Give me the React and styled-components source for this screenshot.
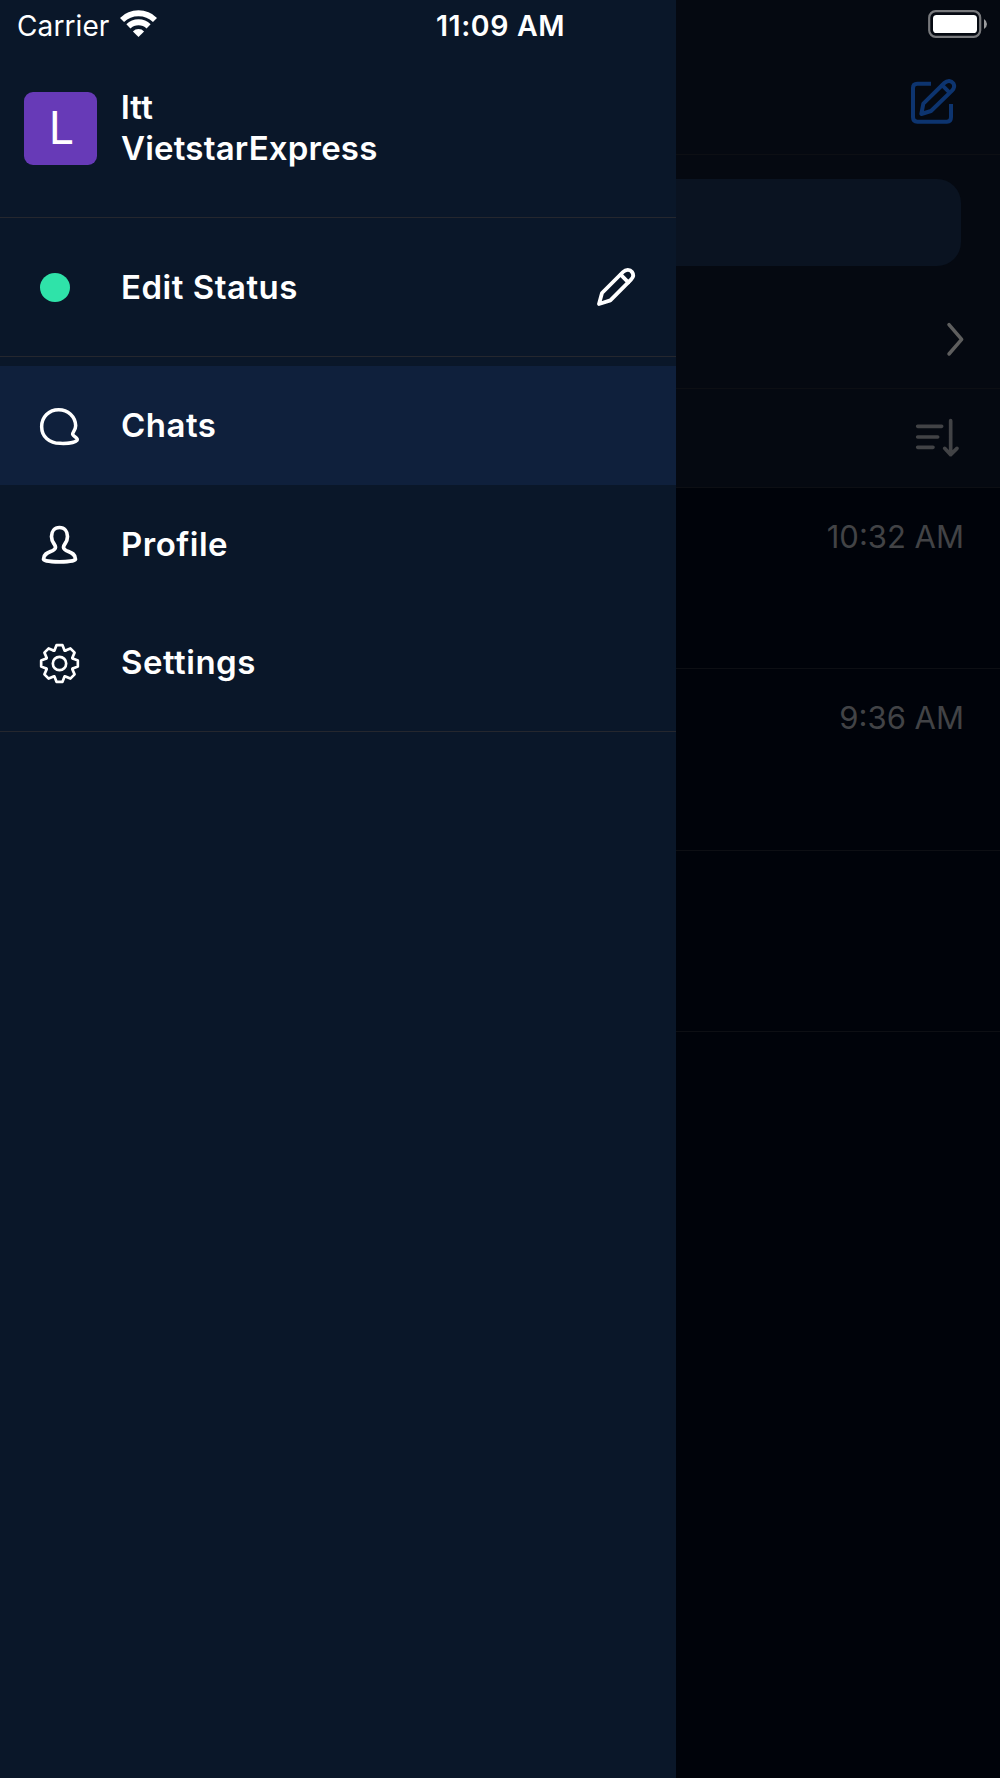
import React from 'react'
import styled, { createGlobalStyle, ThemeProvider } from 'styled-components'

const theme = {
    colors: {
        drawer: '#0a1729',
        drawerActive: '#0f203c',
        drawerLine: '#25272e',
        panel: '#050911',
        list: '#00030a',
        listLine: '#0d0f14',
        search: '#0a1321',
        avatar: '#673ab7',
        online: '#2fe3a9',
        white: '#fff',
        blue: '#0d346f',
        grayMuted: '#424346',
        gray: '#5e5e5e'
    }
}

const gearPath = () => {
    const tooth = [[-14, -42], [-9, -55], [9, -55], [14, -42]]
    const rotate = ([x, y], deg) => {
        const a = (deg * Math.PI) / 180
        return [
            (x * Math.cos(a) - y * Math.sin(a)).toFixed(2),
            (x * Math.sin(a) + y * Math.cos(a)).toFixed(2)
        ].join(' ')
    }
    let d = 'M' + rotate(tooth[0], 0)
    for (let i = 0; i < 8; i++) {
        const deg = i * 45
        d += ' L' + rotate(tooth[1], deg) + ' L' + rotate(tooth[2], deg) + ' L' + rotate(tooth[3], deg)
        d += ' Q' + rotate([0, -39], deg + 22.5) + ' ' + rotate(tooth[0], deg + 45)
    }
    return d + 'Z'
}

const WifiIcon = () => (
    <svg width="37" height="27" viewBox="0 0 37 27">
        <g fill="none" stroke="#fff" strokeWidth="5.8">
            <path d="M2 10 A23.6 23.6 0 0 1 35 10" />
            <path d="M8.4 16.4 A14.4 14.4 0 0 1 28.6 16.4" />
        </g>
        <path d="M18.5 27 L12.9 21.4 A8 8 0 0 1 24.1 21.4 Z" fill="#fff" />
    </svg>
)

const BatteryIcon = () => (
    <svg width="59" height="28" viewBox="0 0 59 28">
        <rect x="1.2" y="1.2" width="51" height="25.6" rx="6.5" fill="none" stroke="#78797c" strokeWidth="2.2" />
        <rect x="5" y="5" width="44" height="18" rx="3.6" fill="#fff" />
        <path d="M56 9 Q59 11 59 14 Q59 17 56 19 Z" fill="#9b9c9e" />
    </svg>
)

const ComposeIcon = () => (
    <Stroke width="45" height="45" viewBox="753 237 135 135" $width={12}>
        <path d="M813 251 H772 Q759 251 759 264 V352 Q759 365 772 365 H861 Q873 365 873 352 V312" strokeLinecap="butt" />
        <path d="M790 311 L853 249 C862 240 874 241 880 250 C884 257 883 265 876 272 L813 333 L784 342 Z" />
        <path d="M847 256 L868 277" />
    </Stroke>
)

const PencilIcon = () => (
    <Stroke width="39" height="38" viewBox="110 86 117 114" $width={11.5}>
        <path d="M125 161 L188 98 C197 89 209 90 215 98 C221 106 219 114 212 121 L150 183 L116 194 Z" />
        <path d="M181 106 L204 129" />
    </Stroke>
)

const ChatIcon = () => (
    <Stroke width="39" height="37" viewBox="120 474 117 111" $width={10.5}>
        <path d="M176 479 C147 479 125 501 125 530 C125 560 148 580 180 580 C205 581 226 577 231 571 C236 564 221 560 218 553 C217 546 227 541 227 527 C226 500 204 479 176 479Z" />
    </Stroke>
)

const ProfileIcon = () => (
    <Stroke width="39" height="39" viewBox="120.5 136.5 117 117" $width={11}>
        <path d="M179 144 C164 144 155 156 155 171 C155 189 166 193 167 203 C167 219 131 213 131 239 C131 244 155 247 179 247 C203 247 227 244 227 239 C227 213 191 219 191 203 C192 193 203 189 203 171 C203 156 194 144 179 144Z" />
    </Stroke>
)

const SettingsIcon = () => (
    <Stroke width="39" height="39" viewBox="-58.5 -58.5 117 117" $width={8}>
        <path d={gearPath()} />
        <circle r="20" />
    </Stroke>
)

const ChevronIcon = () => (
    <Stroke width="17" height="33" viewBox="201 68 51 99" $width={10.5}>
        <path d="M207 73 L245 117 L207 161" />
    </Stroke>
)

const SortIcon = () => (
    <Stroke width="43" height="38" viewBox="107 358 129 114" $width={11}>
        <path d="M112 380 H184 M112 412 H172 M112 443 H158 M211 363 V465 M193 446 L211 465 L230 446" />
    </Stroke>
)

const items = [
    { name: 'Chats', icon: <ChatIcon />, active: true },
    { name: 'Profile', icon: <ProfileIcon /> },
    { name: 'Settings', icon: <SettingsIcon /> }
]

const conversations = ['10:32 AM', '9:36 AM', '']

const App = () => (
    <ThemeProvider theme={theme}>
        <GlobalStyle />
        <Screen>
            <StatusBar>
                <Carrier>Carrier <WifiIcon /></Carrier>
                <Clock>11:09 AM</Clock>
                <BatteryIcon />
            </StatusBar>
            <Drawer>
                <Account>
                    <Avatar>L</Avatar>
                    <div>
                        <Name>ltt</Name>
                        <Name>VietstarExpress</Name>
                    </div>
                </Account>
                <EditStatus>
                    <Slot><Dot /></Slot>
                    <Label>Edit Status</Label>
                    <PencilIcon />
                </EditStatus>
                <Menu>
                    {items.map(item => (
                        <MenuItem key={item.name} $active={item.active}>
                            <Slot>{item.icon}</Slot>
                            <Label>{item.name}</Label>
                        </MenuItem>
                    ))}
                </Menu>
            </Drawer>
            <Backdrop>
                <Header><ComposeIcon /></Header>
                <SearchArea><Search /></SearchArea>
                <ArchiveRow><ChevronIcon /></ArchiveRow>
                <SortRow><SortIcon /></SortRow>
                {conversations.map((time, i) => (
                    <Conversation key={i}>{time}</Conversation>
                ))}
            </Backdrop>
        </Screen>
    </ThemeProvider>
)

const GlobalStyle = createGlobalStyle`
    * {
        box-sizing: border-box;
    }
    body {
        margin: 0;
        background: #00030a;
        font-family: Inter, 'Liberation Sans', sans-serif;
    }
    svg {
        display: block;
        flex-shrink: 0;
    }
`

const Stroke = styled.svg`
    fill: none;
    stroke: currentColor;
    stroke-width: ${({ $width }) => $width};
    stroke-linecap: round;
    stroke-linejoin: round;
    overflow: visible;
`

const Screen = styled.div`
    display: grid;
    grid-template-columns: 676px 1fr;
    height: 1778px;
    overflow: hidden;
    position: relative;
    width: 1000px;
`

/* the system bar floats over both the drawer and the dimmed page */
const StatusBar = styled.header`
    align-items: center;
    color: ${({ theme }) => theme.colors.white};
    display: grid;
    grid-template-columns: 1fr auto 1fr;
    height: 48px;
    left: 0;
    padding: 0 13px 0 17px;
    position: absolute;
    top: 0;
    width: 100%;

    > svg {
        justify-self: end;
    }
`

const Carrier = styled.div`
    align-items: center;
    display: flex;
    font-size: 28px;
    gap: 11px;
    letter-spacing: 0.1px;
    line-height: 34px;
    padding-top: 3px;

    svg {
        margin-top: -4px;
    }
`

const Clock = styled.div`
    font-size: 28.5px;
    font-weight: 600;
    letter-spacing: 0.6px;
    line-height: 34px;
    margin-left: -3px;
    padding-top: 3px;
`

const Drawer = styled.aside`
    background: ${({ theme }) => theme.colors.drawer};
    color: ${({ theme }) => theme.colors.white};
`

const Account = styled.section`
    align-items: flex-start;
    border-bottom: 1px solid ${({ theme }) => theme.colors.drawerLine};
    display: flex;
    gap: 24px;
    height: 218px;
    padding: 87px 24px 0;
`

const Avatar = styled.div`
    align-items: center;
    background: ${({ theme }) => theme.colors.avatar};
    border-radius: 9px;
    display: flex;
    font-size: 45px;
    height: 73px;
    justify-content: center;
    margin-top: 5px;
    padding: 0 0 2px 2px;
    width: 73px;
`

const Name = styled.div`
    font-size: 33px;
    font-weight: 600;
    letter-spacing: 0.2px;
    line-height: 41px;
`

const Slot = styled.span`
    display: flex;
    width: 81px;
`

const Label = styled.span`
    flex: 1;
    font-size: 33px;
    font-weight: 600;
    letter-spacing: 0.5px;
    line-height: 40px;
`

const EditStatus = styled.section`
    align-items: center;
    border-bottom: 1px solid ${({ theme }) => theme.colors.drawerLine};
    display: flex;
    height: 139px;
    padding: 0 40px;
`

const Dot = styled.i`
    background: ${({ theme }) => theme.colors.online};
    border-radius: 50%;
    height: 29px;
    width: 30px;
`

const Menu = styled.nav`
    border-bottom: 1px solid ${({ theme }) => theme.colors.drawerLine};
    padding: 9px 0;
`

const MenuItem = styled.div`
    align-items: center;
    background: ${({ theme, $active }) => ($active ? theme.colors.drawerActive : 'transparent')};
    display: flex;
    height: 118.6px;
    padding: 0 40px;

    svg {
        margin-top: 2px;
    }
`

const Backdrop = styled.main`
    background: ${({ theme }) => theme.colors.list};
`

const Row = styled.div`
    align-items: center;
    background: ${({ theme }) => theme.colors.panel};
    border-bottom: 1px solid ${({ theme }) => theme.colors.listLine};
    display: flex;
    justify-content: flex-end;
`

const Header = styled(Row)`
    align-items: flex-start;
    color: ${({ theme }) => theme.colors.blue};
    height: 155px;
    padding: 79px 44px 0;
`

const SearchArea = styled.div`
    background: ${({ theme }) => theme.colors.panel};
    height: 135px;
    padding: 24px 39px 24px 0;
`

const Search = styled.div`
    background: ${({ theme }) => theme.colors.search};
    border-radius: 0 24px 24px 0;
    height: 87px;
`

const ArchiveRow = styled(Row)`
    color: ${({ theme }) => theme.colors.gray};
    height: 99px;
    padding-right: 36px;
`

const SortRow = styled(Row)`
    color: ${({ theme }) => theme.colors.grayMuted};
    height: 99px;
    padding-right: 41px;
`

const Conversation = styled.div`
    border-bottom: 1px solid ${({ theme }) => theme.colors.listLine};
    color: ${({ theme }) => theme.colors.grayMuted};
    font-size: 31px;
    height: 181.3px;
    line-height: 38px;
    padding: 30px 36px;
    text-align: right;
`

export default App
